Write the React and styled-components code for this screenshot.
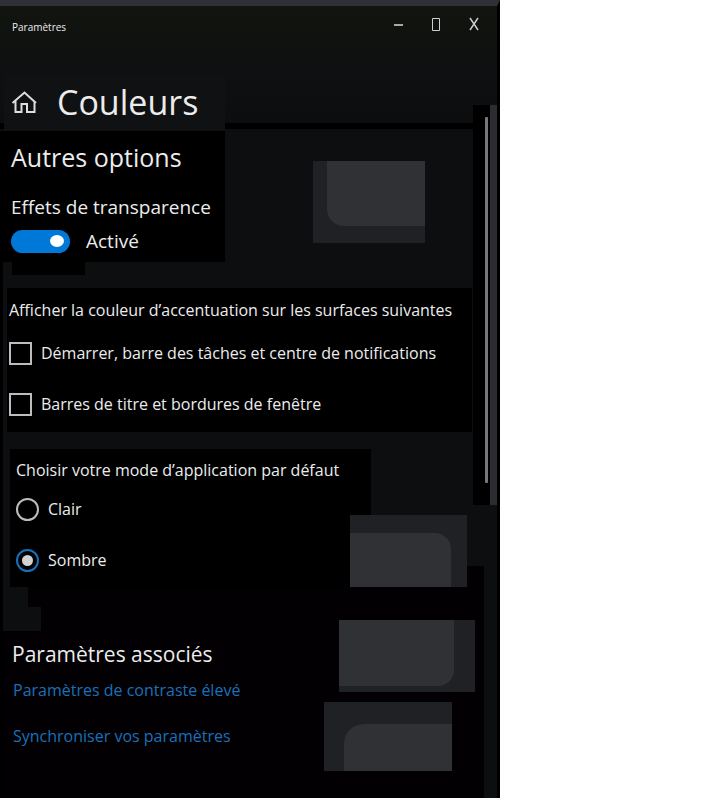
import React, { useState } from "react";
import styled, { createGlobalStyle } from "styled-components";

const GlobalStyle = createGlobalStyle`
  *, *::before, *::after { box-sizing: border-box; }
  body { margin: 0; background: #fff; }
  button, input { font: inherit; color: inherit; margin: 0; padding: 0; }
`;

const Window = styled.main`
  display: grid;
  grid-template-columns: minmax(0, 1fr) 24px;
  grid-template-rows: auto 1fr;
  max-width: 500px;
  min-height: 100vh;
  border-top: 6px solid #303036;
  border-right: 3px solid #000;
  background: #0c0e0f;
  color: #ececec;
  font-family: "Open Sans", "Noto Sans", sans-serif;
  font-size: 16px;
  line-height: 24px;
`;

const Header = styled.header`
  grid-column: 1 / -1;
  grid-row: 1;
  height: 125px;
  background:
    linear-gradient(#101113, #101113) 4px 68px / 221px 57px no-repeat,
    linear-gradient(#000, #000) 0 117px / 100% 6px no-repeat,
    linear-gradient(#12140f, #0e1011 50%, #0c0d0f);
`;

const TitleBar = styled.div`
  display: flex;
  align-items: flex-start;
  justify-content: space-between;
  padding: 6px 11px 0 12px;
  height: 36px;
`;

const WindowTitle = styled.span`
  padding-top: 3px;
  font-size: 10px;
`;

const Controls = styled.div`
  display: flex;
  gap: 14px;
`;

const ControlButton = styled.button`
  display: grid;
  place-items: center;
  width: 24px;
  height: 24px;
  border: 0;
  background: none;
`;

const PageHeading = styled.div`
  display: flex;
  align-items: center;
  gap: 20px;
  margin-top: 34px;
  padding-left: 11px;
  height: 52px;
`;

const HomeLink = styled.a`
  display: grid;
  color: #dedede;
`;

const PageTitle = styled.h1`
  margin: 0;
  font-size: 34px;
  line-height: 44px;
  font-weight: 400;
`;

const Content = styled.div`
  grid-column: 1 / -1;
  grid-row: 2;
  display: flex;
  flex-direction: column;
  border-left: 3px solid #000;
`;

const Rail = styled.div`
  grid-column: 2;
  grid-row: 1 / 3;
  align-self: start;
  height: 400px;
  margin-top: 99px;
  padding: 12px 2px 22px 12px;
  border-right: 7px solid #2c2d31;
  background: #000;
  z-index: 1;
`;

const RailThumb = styled.div`
  height: 100%;
  border-radius: 1px;
  background: #77777c;
`;

const Section = styled.section`
  position: relative;
`;

const Transparency = styled.div`
  width: 222px;
  height: 131px;
  padding: 10px 0 0 8px;
  background: #000;
`;

const Step = styled.div`
  width: 73px;
  height: 13px;
  margin: 0 0 13px 9px;
  background: #000;
`;

const Heading = styled.h2`
  margin: 0;
  font-size: ${(p) => p.$size};
  line-height: 32px;
  font-weight: 400;
`;

const Label = styled.p`
  margin: 22px 0 0;
  font-size: 19px;
`;

const SwitchRow = styled.label`
  display: flex;
  align-items: center;
  gap: 16px;
  margin-top: 10px;
  font-size: 19px;
`;

const Switch = styled.input`
  appearance: none;
  display: flex;
  align-items: center;
  justify-content: flex-end;
  width: 59px;
  height: 23px;
  padding: 0 6px;
  border-radius: 12px;
  background: #0078d7;

  &:not(:checked) { justify-content: flex-start; background: #555; }
  &::before {
    content: "";
    width: 14px;
    height: 12px;
    border-radius: 50%;
    background: #fff;
  }
`;

const Accent = styled.fieldset`
  margin: 0 25px 0 4px;
  padding: 10px 0 16px 2px;
  border: 0;
  background: #000;
  min-width: 0;
`;

const Legend = styled.legend`
  float: left;
  width: 100%;
  padding: 0;
`;

const Options = styled.div`
  clear: both;
  display: grid;
  gap: 27px;
  padding-top: ${(p) => p.$top};
`;

const Option = styled.label`
  display: flex;
  align-items: center;
  gap: 9px;
`;

const CheckBox = styled.input`
  appearance: none;
  width: 23px;
  height: 23px;
  border: 2px solid #bdbdbf;
  &:checked { background: #0078d7; }
`;

const Radio = styled.input`
  appearance: none;
  display: grid;
  place-items: center;
  width: 23px;
  height: 23px;
  border: 2px solid #bdbdbf;
  border-radius: 50%;

  &:checked { border-color: #1670bd; }
  &:checked::before {
    content: "";
    width: 11px;
    height: 11px;
    border-radius: 50%;
    background: #d2d2d2;
  }
`;

const ModeArea = styled(Section)`
  margin-top: 17px;
  background: linear-gradient(#020003, #020003) 7px 117px / 474px 21px no-repeat;
`;

const Mode = styled.fieldset`
  width: 361px;
  margin: 0 0 0 7px;
  padding: 9px 0 15px 6px;
  border: 0;
  background: #000;
`;

const Related = styled(Section)`
  flex: 1;
  margin-right: 13px;
  padding: 51px 0 50px 9px;
  background:
    linear-gradient(#0c0e0f, #0c0e0f) 0 0 / 25px 21px no-repeat,
    linear-gradient(#0c0e0f, #0c0e0f) 0 20px / 38px 24px no-repeat,
    #020003;
`;

const RelatedLinks = styled.nav`
  display: grid;
  justify-items: start;
  gap: 22px;
  padding: 8px 0 0 1px;
`;

const RelatedLink = styled.a`
  color: #1a70b8;
  text-decoration: none;
`;

const Tile = styled.div`
  position: absolute;
  left: ${(p) => p.$left};
  top: ${(p) => p.$top};
  width: ${(p) => p.$width};
  height: ${(p) => p.$height};
  padding: ${(p) => p.$inset};
  background: #202124;

  &::before {
    content: "";
    display: block;
    height: 100%;
    border-radius: ${(p) => p.$radius};
    background: #303134;
  }
`;

export default function App() {
  const [mode, setMode] = useState("sombre");
  return (
    <>
      <GlobalStyle />
      <Window>
        <Header>
          <TitleBar>
            <WindowTitle>Paramètres</WindowTitle>
            <Controls>
              <ControlButton aria-label="Réduire">
                <svg width="24" height="24"><path d="M8 13h9" stroke="#a8a8a8" strokeWidth="2" /></svg>
              </ControlButton>
              <ControlButton aria-label="Agrandir">
                <svg width="24" height="24"><path d="M8.5 6.5h7v12h-7z" fill="none" stroke="#d0d0d0" /></svg>
              </ControlButton>
              <ControlButton aria-label="Fermer">
                <svg width="24" height="24"><path d="M8 6l8 12M16 6L8 18" fill="none" stroke="#d0d0d0" strokeWidth="1.4" /></svg>
              </ControlButton>
            </Controls>
          </TitleBar>
          <PageHeading>
            <HomeLink href="#" aria-label="Accueil">
              <svg width="26" height="24" fill="none" stroke="currentColor" strokeWidth="2">
                <path d="M1.5 13L13.5 2.500L25 13M4.500 11v11h6v-8h5.500v8h7.500V11" />
              </svg>
            </HomeLink>
            <PageTitle>Couleurs</PageTitle>
          </PageHeading>
        </Header>
        <Content>
          <Section>
            <Transparency>
              <Heading $size="25px">Autres options</Heading>
              <Label>Effets de transparence</Label>
              <SwitchRow>
                <Switch type="checkbox" role="switch" defaultChecked />
                Activé
              </SwitchRow>
            </Transparency>
            <Step />
            <Tile $left="310px" $top="30px" $width="112px" $height="82px" $inset="0 0 17px 14px" $radius="0 0 0 17px" />
          </Section>
          <Accent>
            <Legend>Afficher la couleur d’accentuation sur les surfaces suivantes</Legend>
            <Options $top="19px">
              <Option><CheckBox type="checkbox" />Démarrer, barre des tâches et centre de notifications</Option>
              <Option><CheckBox type="checkbox" />Barres de titre et bordures de fenêtre</Option>
            </Options>
          </Accent>
          <ModeArea>
            <Mode>
              <Legend>Choisir votre mode d’application par défaut</Legend>
              <Options $top="15px">
                <Option>
                  <Radio type="radio" name="mode" checked={mode === "clair"} onChange={() => setMode("clair")} />Clair
                </Option>
                <Option>
                  <Radio type="radio" name="mode" checked={mode === "sombre"} onChange={() => setMode("sombre")} />Sombre
                </Option>
              </Options>
            </Mode>
            <Tile $left="347px" $top="66px" $width="117px" $height="72px" $inset="18px 16px 0 0" $radius="0 16px 0 0" />
          </ModeArea>
          <Related>
            <Heading $size="21px">Paramètres associés</Heading>
            <RelatedLinks>
              <RelatedLink href="#">Paramètres de contraste élevé</RelatedLink>
              <RelatedLink href="#">Synchroniser vos paramètres</RelatedLink>
            </RelatedLinks>
            <Tile $left="336px" $top="33px" $width="136px" $height="72px" $inset="0 21px 6px 0" $radius="0 0 16px 0" />
            <Tile $left="321px" $top="115px" $width="128px" $height="69px" $inset="22px 0 0 20px" $radius="20px 0 0 0" />
          </Related>
        </Content>
        <Rail>
          <RailThumb />
        </Rail>
      </Window>
    </>
  );
}
